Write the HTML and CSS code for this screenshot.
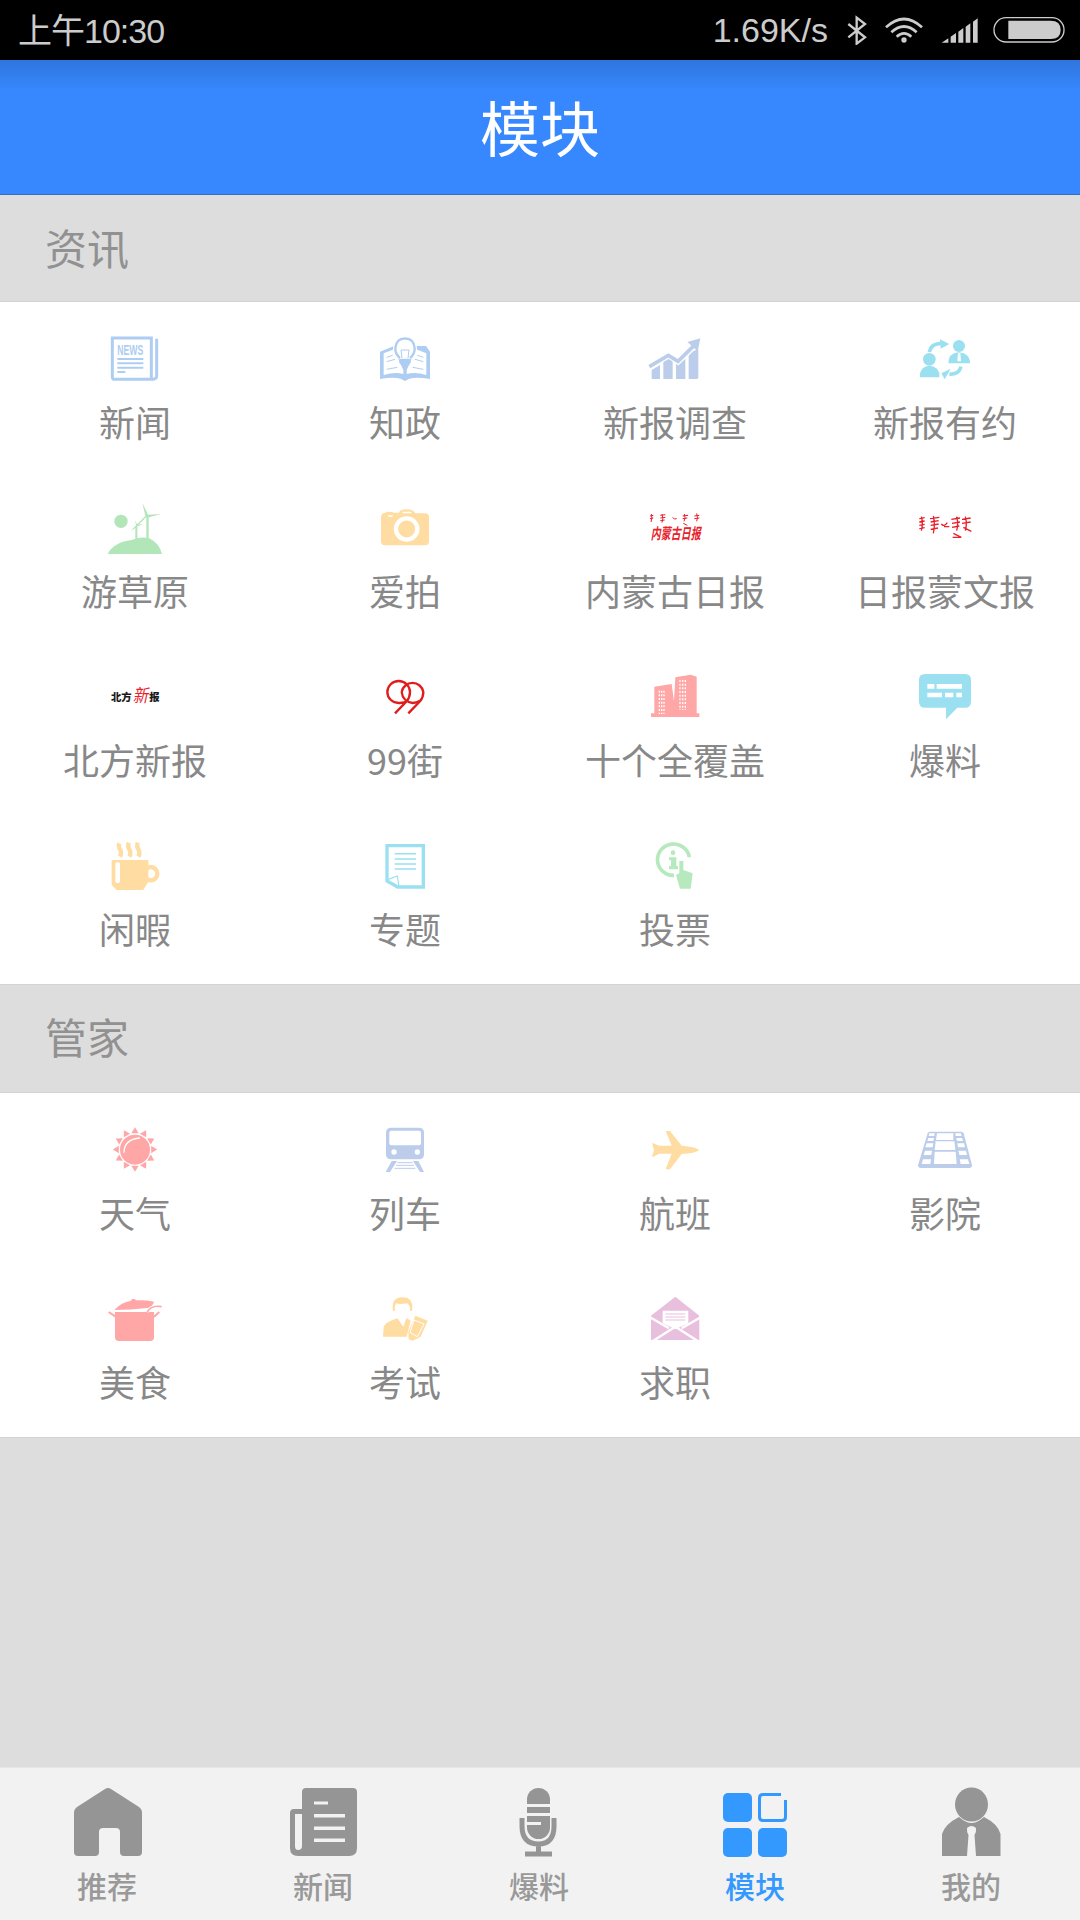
FILE: index.html
```html
<!DOCTYPE html>
<html lang="zh-CN">
<head>
<meta charset="utf-8">
<title>模块</title>
<link rel="stylesheet" href="styles.css">
</head>
<body>
<div class="app">
  <div class="status">
    <span class="time">上午10:30</span>
    <div class="status-right">
      <span class="speed">1.69K/s</span>
      <svg class="st bt" viewBox="495 45 72 90"><path class="s" stroke-width="7" d="M505 72 L555 112 L530 131 V53 L555 72 L505 112"/></svg>
      <svg class="st wifi" viewBox="612 45 120 90"><path class="s" stroke-width="8" d="M618 82 Q672 32 726 82 M634 97 Q672 62 710 97 M650 110 Q672 90 694 110"/><circle cx="672" cy="120" r="8"/></svg>
      <svg class="st signal" viewBox="783 45 114 90"><path d="M785 128 L805 115 V128 Z M812 128 V110 L828 99 V128 Z M835 128 V95 L850 84 V128 Z M857 128 V80 L871 70 V128 Z M879 128 V65 L893 55 V128 Z"/></svg>
      <svg class="st batt" viewBox="936 45 222 90"><rect class="s" stroke-width="4" x="942" y="53" width="210" height="73" rx="36"/><path d="M985 62 H1112 Q1142 62 1142 90 Q1142 117 1112 117 H985 Z"/></svg>
    </div>
  </div>
  <header class="bar">模块</header>
  <main class="main">
    <h2 class="sec">资讯</h2>
    <div class="grid">
      <a class="item">
        <svg class="ico blue" viewBox="129 18 192 192"><path class="s" stroke-width="9" d="M157 54 H274 V178 H165 Q157 178 157 170 Z"/><path class="s" stroke-width="9" d="M290 56 V168 Q290 178 276 178"/><text class="news" x="172" y="104" textLength="78" lengthAdjust="spacingAndGlyphs">NEWS</text><path class="s" stroke-width="6" d="M172 117 H250 M172 130 H250 M172 143 H250 M172 156 H196"/></svg>
        <span class="lab">新闻</span>
      </a>
      <a class="item">
        <svg class="ico blue" viewBox="939 18 192 192"><path d="M960 95 L1002 78 L1068 78 L1098 78 L1110 95 V177 Q1070 170 1048 176 L1035 183 L1022 176 Q1000 170 960 177 Z"/><path class="w" d="M971 100 L1002 88 L1030 150 V162 Q1005 154 971 165 Z M1099 100 L1068 88 L1040 150 V162 Q1065 154 1099 165 Z"/><path class="s" stroke-width="3" d="M980 112 L998 106 M980 125 L1005 118 M980 148 L1012 142 M1090 112 L1072 106 M1090 125 L1065 118 M1090 148 L1058 142"/><circle class="w" cx="1035" cy="86" r="36"/><path class="s" stroke-width="7" d="M1020 114 Q1005 102 1006 84 Q1008 56 1035 55 Q1062 56 1064 84 Q1065 102 1050 114"/><path d="M1018 116 H1052 V128 L1042 141 H1028 L1018 128 Z"/><path class="s" stroke-width="3" d="M1026 114 L1023 90 H1047 L1044 114"/></svg>
        <span class="lab">知政</span>
      </a>
      <a class="item">
        <svg class="ico indigo" viewBox="129 18 192 192"><path d="M155 150 L180 135 V177 H155 Z M190 126 L218 110 V177 H190 Z M228 126 L256 110 V177 H228 Z M266 98 L295 88 V172 Q295 177 290 177 H266 Z"/><path class="wl" stroke-width="18" fill="none" d="M146 140 L205 105 L234 125 L285 76"/><path class="s" stroke-width="11" d="M148 140 L205 106 L234 124 L285 74"/><path d="M262 66 L301 55 L293 94 Z"/></svg>
        <span class="lab">新报调查</span>
      </a>
      <a class="item">
        <svg class="ico cyan" viewBox="939 18 192 192"><circle cx="1077" cy="78" r="18"/><path d="M1045 130 Q1045 100 1075 97 Q1110 100 1110 130 Z"/><path class="w" d="M1074 100 H1081 L1083 124 H1072 Z"/><circle cx="988" cy="118" r="19"/><path d="M960 172 L960 160 Q964 140 988 137 Q1014 140 1018 160 V172 Z"/><path class="s" stroke-width="11" d="M988 96 Q993 70 1024 70"/><path d="M1020 58 L1048 72 L1022 86 Z"/><path class="s" stroke-width="11" d="M1083 140 Q1078 163 1048 163"/><path d="M1052 146 L1024 160 L1034 178 Z"/></svg>
        <span class="lab">新报有约</span>
      </a>
      <a class="item">
        <svg class="ico green" viewBox="129 525 192 192"><circle cx="183" cy="604" r="20"/><path d="M143 702 Q160 667 215 660 Q240 648 268 655 Q298 670 306 702 Z"/><path d="M259 590 H266 V658 H259 Z M226 620 H232 V658 H226 Z"/><path d="M247 548 L264 584 L303 582 L268 592 L258 592 L225 625 L212 632 L256 588 Z"/><path d="M224 600 L232 614 L250 612 L230 620 Z"/></svg>
        <span class="lab">游草原</span>
      </a>
      <a class="item">
        <svg class="ico amber" viewBox="939 525 192 192"><path d="M975 578 Q985 572 1003 578 L1017 578 Q1020 568 1040 568 Q1060 568 1066 580 H1095 Q1107 580 1107 592 V664 Q1107 676 1095 676 H975 Q963 676 963 664 V592 Q963 580 975 578 Z"/><path class="w" d="M984 586 H998 V590 H984 Z M1028 575 H1054 V580 H1028 Z"/><circle class="sw" cx="1040" cy="627" r="32" stroke-width="13" fill="none"/></svg>
        <span class="lab">爱拍</span>
      </a>
      <a class="item">
        <svg class="ico red" viewBox="129 525 192 192"><path class="s" stroke-width="3" d="M154 582 Q158 594 153 606 M150 588 L160 586 M150 596 L160 594 M186 582 Q191 596 186 608 M181 586 L196 584 M181 594 L196 592 M181 602 L194 600 M218 592 Q222 600 230 596 M253 582 Q258 594 252 604 M248 588 L264 586 M248 596 L262 594 M250 610 L262 616 M290 580 Q295 594 290 604 M283 588 L298 586 M283 596 L298 594"/><text class="script" transform="translate(152 656) scale(1 1.5)">内蒙古日报</text></svg>
        <span class="lab">内蒙古日报</span>
      </a>
      <a class="item">
        <svg class="ico red" viewBox="939 525 192 192"><path class="s" stroke-width="4" d="M964 590 Q970 610 964 632 M958 596 L974 593 M958 606 L974 603 M958 616 L974 613 M958 626 L974 623 M1000 588 Q1006 614 1000 640 M990 596 L1018 592 M992 606 L1016 602 M992 616 L1016 612 M992 628 L1014 624 M1024 612 Q1032 622 1042 608 M1032 620 H1048 M1070 590 Q1076 610 1070 632 M1054 598 L1080 594 M1056 610 L1080 606 M1056 622 L1078 618 M1096 590 Q1102 610 1096 632 M1086 598 L1112 594 M1086 610 L1112 606 M1090 622 L1114 634 M1060 640 L1084 652 M1058 652 H1078"/></svg>
        <span class="lab">日报蒙文报</span>
      </a>
      <a class="item">
        <svg class="ico black" viewBox="129 12 192 192"><text class="bf" x="153" y="124">北方</text><text class="bfx" x="218" y="127" textLength="46" lengthAdjust="spacingAndGlyphs">新</text><text class="bf" x="268" y="124">报</text></svg>
        <span class="lab">北方新报</span>
      </a>
      <a class="item">
        <svg class="ico crim" viewBox="939 12 192 192"><path class="s" stroke-width="7" d="M1005 160 L1040 124 Q1050 112 1050 96 A34 33 0 1 0 1016 129 Q1032 130 1042 122"/><path class="s" stroke-width="7" d="M1045 160 L1080 124 Q1090 112 1090 96 A33 33 0 0 0 1025 96"/><path class="s" stroke-width="7" d="M1025 96 Q1028 124 1058 129 Q1070 128 1080 122"/></svg>
        <span class="lab">99街</span>
      </a>
      <a class="item">
        <svg class="ico pink" viewBox="129 12 192 192"><path d="M153 171 V160 H163 V80 L215 72 L222 124 L226 52 L272 44 L290 50 V160 H298 V171 Z"/><path class="sw" stroke-width="4" stroke-dasharray="6 5" fill="none" d="M178 92 V162 M185 92 V162 M192 92 V162 M240 60 V150 M248 60 V150 M256 60 V150"/></svg>
        <span class="lab">十个全覆盖</span>
      </a>
      <a class="item">
        <svg class="ico cyan" viewBox="939 12 192 192"><path d="M975 42 H1095 Q1113 42 1113 60 V125 Q1113 143 1095 143 H1072 L1038 178 V143 H975 Q957 143 957 125 V60 Q957 42 975 42 Z"/><path class="w" d="M982 72 H1003 V86 H982 Z M1010 72 H1086 V86 H1010 Z M982 98 H1026 V112 H982 Z M1035 98 H1060 V112 H1035 Z M1069 98 H1086 V112 H1069 Z"/></svg>
        <span class="lab">爆料</span>
      </a>
      <a class="item">
        <svg class="ico amber" viewBox="129 519 192 192"><path d="M155 600 H265 V665 L250 690 H170 L155 675 Z"/><circle class="s" cx="272" cy="641" r="20" stroke-width="13"/><rect class="w" x="166" y="607" width="14" height="62" rx="5"/><path class="s" stroke-width="13" d="M178 550 Q174 560 181 570 Q186 580 180 590 M206 548 Q202 560 209 570 Q214 580 208 590 M233 548 Q229 560 236 570 Q241 580 235 590"/></svg>
        <span class="lab">闲暇</span>
      </a>
      <a class="item">
        <svg class="ico cyan" viewBox="939 519 192 192"><path class="s" stroke-width="10" d="M981 557 H1090 V681 H1013 L981 663 Z"/><path class="s" stroke-width="4.500" d="M1004 581 H1068 M1004 597 H1068 M1004 612 H1068 M1004 627 H1068"/><path class="s" stroke-width="3.500" d="M985 658 L1012 648 L1017 680"/></svg>
        <span class="lab">专题</span>
      </a>
      <a class="item">
        <svg class="ico mint" viewBox="129 519 192 192"><path class="s" stroke-width="11" d="M222 646 A48 47 0 1 1 268 592"/><circle cx="219" cy="578" r="7"/><path d="M207 592 H229 V618 H234 V628 H207 V618 H213 V601 H207 Z"/><path d="M228 645 L238 640 V603 H250 V630 L278 640 L272 686 H240 Z"/></svg>
        <span class="lab">投票</span>
      </a>
    </div>
    <h2 class="sec sec-second">管家</h2>
    <div class="grid grid-second">
      <a class="item">
        <svg class="ico pink" viewBox="129 21 192 192"><circle cx="225" cy="119" r="45"/><path class="wl" stroke-width="4" fill="none" d="M192 128 Q192 88 240 84"/><g><polygon points="225,52 236,70 214,70"/><polygon points="225,52 236,70 214,70" transform="rotate(30 225 118.500)"/><polygon points="225,52 236,70 214,70" transform="rotate(60 225 118.500)"/><polygon points="225,52 236,70 214,70" transform="rotate(90 225 118.500)"/><polygon points="225,52 236,70 214,70" transform="rotate(120 225 118.500)"/><polygon points="225,52 236,70 214,70" transform="rotate(150 225 118.500)"/><polygon points="225,52 236,70 214,70" transform="rotate(180 225 118.500)"/><polygon points="225,52 236,70 214,70" transform="rotate(210 225 118.500)"/><polygon points="225,52 236,70 214,70" transform="rotate(240 225 118.500)"/><polygon points="225,52 236,70 214,70" transform="rotate(270 225 118.500)"/><polygon points="225,52 236,70 214,70" transform="rotate(300 225 118.500)"/><polygon points="225,52 236,70 214,70" transform="rotate(330 225 118.500)"/></g></svg>
        <span class="lab">天气</span>
      </a>
      <a class="item">
        <svg class="ico indigo" viewBox="939 21 192 192"><rect x="978" y="53" width="114" height="95" rx="14"/><rect class="w" x="988" y="62" width="95" height="44" rx="6"/><circle class="w" cx="1002" cy="126" r="8"/><circle class="w" cx="1072" cy="126" r="8"/><path d="M995 153 H1011 L990 186 H977 Z M1075 153 H1059 L1080 186 H1092 Z"/><path class="s" stroke-width="3" d="M1012 158 H1058 M1008 166 H1062 M1004 175 H1066"/></svg>
        <span class="lab">列车</span>
      </a>
      <a class="item">
        <svg class="ico amber" viewBox="129 21 192 192"><path d="M298 120 Q285 110 245 107 L210 63 H197 L215 107 H178 L160 100 H156 L162 120 L156 140 H160 L178 131 H215 L197 178 H210 L245 132 Q285 130 298 120 Z"/></svg>
        <span class="lab">航班</span>
      </a>
      <a class="item">
        <svg class="ico indigo" viewBox="939 21 192 192"><path d="M990 65 H1084 Q1089 65 1091 70 L1116 166 Q1116 174 1110 174 H960 Q954 174 954 166 L983 70 Q985 65 990 65 Z"/><path class="w" d="M1011 70 H1060 V90 H1008 Z M1007 94 H1063 L1066 120 H1004 Z M1004 125 H1067 L1070 162 H1002 Z M988 70 H1004 L1003 78 H986 Z M985 84 H1002 L1000 93 H982 Z M980 100 H1000 L998 112 H976 Z M975 122 H996 L994 135 H971 Z M969 148 H993 L991 162 H965 Z M1066 70 H1083 L1085 78 H1067 Z M1069 84 H1086 L1089 93 H1071 Z M1072 100 H1092 L1095 112 H1074 Z M1075 122 H1098 L1101 135 H1078 Z M1079 148 H1104 L1108 162 H1082 Z"/></svg>
        <span class="lab">影院</span>
      </a>
      <a class="item">
        <svg class="ico pink" viewBox="129 528 192 192"><path d="M165 606 H282 V681 Q282 693 270 693 H177 Q165 693 165 681 Z"/><path d="M163 600 Q185 576 212 573 A9 9 0 0 1 228 571 Q260 570 282 575 Q278 590 262 594 Q210 600 163 600 Z"/><path class="wl" fill="none" stroke-width="9" d="M262 606 Q274 584 305 590"/><path class="s" stroke-width="6" d="M146 606 L167 620 M282 620 L298 606"/><path class="s" stroke-width="5" d="M262 606 Q274 584 305 590"/></svg>
        <span class="lab">美食</span>
      </a>
      <a class="item">
        <svg class="ico amber" viewBox="939 528 192 192"><path d="M999 603 Q992 562 1028 562 Q1062 562 1056 603 L1050 603 Q1052 588 1042 580 Q1020 584 1008 580 Q1002 590 1005 603 Z"/><path d="M969 680 L971 650 Q976 636 1012 625 L1030 650 L1039 624 L1052 632 L1040 680 Z"/><path d="M1066 617 L1103 632 L1082 680 L1058 692 L1046 688 L1045 665 Z"/><path class="wl" fill="none" stroke-width="3" d="M1062 630 L1092 642 L1072 680 L1050 668 Z"/></svg>
        <span class="lab">考试</span>
      </a>
      <a class="item">
        <svg class="ico plum" viewBox="129 528 192 192"><path d="M153 617 L226 560 L298 617 V690 H153 Z"/><path class="w" d="M188 602 H265 V640 L226 658 L188 640 Z"/><path class="s" stroke-width="3" d="M196 612 H256 M196 621 H256 M196 630 H256"/><path class="wl" fill="none" stroke-width="7" d="M150 622 L207 655 M302 622 L245 655 M160 692 L226 650 L292 692"/></svg>
        <span class="lab">求职</span>
      </a>
    </div>
  </main>
  <nav class="tabs">
    <a class="tab">
      <svg class="tico" viewBox="0 0 80 72"><path d="M37 3 Q40 1 43 3 L71 21 Q74 23 74 27 V66 Q74 70 70 70 H56 Q52 70 52 66 V46 Q52 42 48 42 H35 Q31 42 31 46 V66 Q31 70 27 70 H10 Q6 70 6 66 V27 Q6 23 9 21 Z"/></svg>
      <span class="tlab">推荐</span>
    </a>
    <a class="tab">
      <svg class="tico" viewBox="0 0 80 72"><path d="M22 2 H69 Q73 2 73 6 V62 Q73 70 65 70 H14 Q6 70 6 62 V27 Q6 23 10 23 H18 V6 Q18 2 22 2 Z"/><path class="tw" d="M11 28 H18 V60 Q18 64 14 64 Q11 64 11 60 Z"/><path class="tw" d="M30 15.500 H44 V18.500 H30 Z M30 28 H61 V31.500 H30 Z M30 40.500 H61 V44 H30 Z M30 52.500 H61 V56 H30 Z"/></svg>
      <span class="tlab">新闻</span>
    </a>
    <a class="tab">
      <svg class="tico" viewBox="0 0 80 72"><rect x="27" y="2" width="23" height="51" rx="11.500"/><path class="tw" d="M27 18 H50 V21 H27 Z M27 27 H50 V30 H27 Z M27 36 H41 V39 H27 Z"/><path class="ts" stroke-width="5" d="M22 32 V40 Q22 58 38.500 58 Q54 58 54 40 V32 M38.500 58 V68 M25 68 H52"/></svg>
      <span class="tlab">爆料</span>
    </a>
    <a class="tab active">
      <svg class="tico" viewBox="0 0 80 72"><rect x="7" y="7" width="29" height="29" rx="5"/><rect x="7" y="42" width="29" height="29" rx="5"/><rect x="42" y="42" width="29" height="29" rx="5"/><path class="ts" stroke-width="3" d="M65 8.500 H47 Q43.500 8.500 43.500 12 V31 Q43.500 34.500 47 34.500 H66 Q69.500 34.500 69.500 31 V14"/></svg>
      <span class="tlab">模块</span>
    </a>
    <a class="tab">
      <svg class="tico" viewBox="0 0 80 72"><ellipse cx="39.500" cy="18.500" rx="16.500" ry="17"/><path d="M27 31 Q34 37 39.500 37 Q45 37 52 31 Q66 38 68.500 48 V70 H10 V48 Q13 38 27 31 Z"/><path class="tw" d="M35 42 Q39.500 38 44 42 Q44.500 46 42.500 49 L44 70 H35 L36.500 49 Q34.500 46 35 42 Z"/></svg>
      <span class="tlab">我的</span>
    </a>
  </nav>
</div>
</body>
</html>
```
FILE: styles.css
```css
* { box-sizing: border-box; }
html, body { margin: 0; padding: 0; }
body { font-family: "Noto Sans CJK SC", "Noto Sans", sans-serif; background: #ddd; }
.app { width: 1080px; height: 1920px; display: flex; flex-direction: column; overflow: hidden; }

.status { height: 60px; flex: none; background: #000; color: #ccc; display: flex; align-items: center; justify-content: space-between; padding: 0 14px 0 18px; font-family: "Liberation Sans", "Noto Sans CJK SC", sans-serif; font-size: 34px; }
.time { letter-spacing: -1px; margin-bottom: 4px; }
.status-right { display: flex; align-items: center; }
.speed { margin-right: 17px; margin-left: -3px; }
.st { height: 30px; display: block; fill: #ccc; }
.st .s { fill: none; stroke: #ccc; }
.bt { width: 24px; }
.wifi { width: 40px; margin-left: 15px; }
.signal { width: 38px; margin-left: 17px; }
.batt { width: 74px; margin-left: 13px; }

.bar { height: 135px; flex: none; display: flex; align-items: center; justify-content: center; color: #fff; font-size: 60px; line-height: 1; background: linear-gradient(#2f75dd 0, #3787fe 30px, #3788ff 100%); border-bottom: 1px solid #2f6fc9; padding-bottom: 2px; }

.main { flex: 1; background: #ddd; display: flex; flex-direction: column; }
.sec { margin: 0; height: 107px; flex: none; display: flex; align-items: center; padding: 0 0 4px 45px; font-size: 42px; font-weight: 400; color: #919191; background: #ddd; border-bottom: 1px solid #d3d3d3; }
.sec-second { height: 108px; padding-bottom: 6px; }
.grid { display: grid; grid-template-columns: repeat(4, 270px); background: #fff; padding-bottom: 6px; border-bottom: 1px solid #d3d3d3; }
.item { height: 169px; padding-top: 24px; display: flex; flex-direction: column; align-items: center; }
.lab { margin-top: 6px; height: 50px; line-height: 50px; font-size: 36px; color: #888; white-space: nowrap; }

.ico { width: 64px; height: 64px; display: block; fill: currentColor; flex: none; }
.ico .s { fill: none; stroke: currentColor; }
.ico .w { fill: #fff; }
.ico .wl { stroke: #fff; }
.ico .sw { stroke: #fff; }
.blue { color: #aecdf2; }
.indigo { color: #bccdec; }
.cyan { color: #9be0f0; }
.green { color: #b2e6b8; }
.mint { color: #b7e9be; }
.amber { color: #ffdca1; }
.pink { color: #ffa6a6; }
.plum { color: #e8bfdc; }
.red { color: #e8202a; }
.crim { color: #e01c1c; }
.black { color: #1a1a1a; }
.news { font-family: "Liberation Sans", sans-serif; font-weight: 700; font-size: 44px; }
.script { font-family: "Noto Sans CJK SC", sans-serif; font-weight: 700; font-size: 30px; font-style: italic; }
.bf { font-family: "Noto Sans CJK SC", sans-serif; font-weight: 900; font-size: 31px; }
.bfx { font-family: "Noto Sans CJK SC", sans-serif; font-size: 54px; font-style: italic; fill: #e8202a; }

.tabs { height: 153px; flex: none; display: grid; grid-template-columns: repeat(5, 216px); background: #f2f2f2; border-top: 1px solid #e6e6e6; }
.tab { display: flex; flex-direction: column; align-items: center; padding-top: 18px; color: #959595; }
.tico { width: 80px; height: 72px; display: block; fill: currentColor; }
.tico .ts { fill: none; stroke: currentColor; }
.tico .tw { fill: #f2f2f2; }
.tlab { margin-top: 7px; margin-right: 2px; height: 40px; line-height: 40px; font-size: 30px; font-weight: 500; color: #999; }
.active, .active .tlab { color: #3399ff; }
```
